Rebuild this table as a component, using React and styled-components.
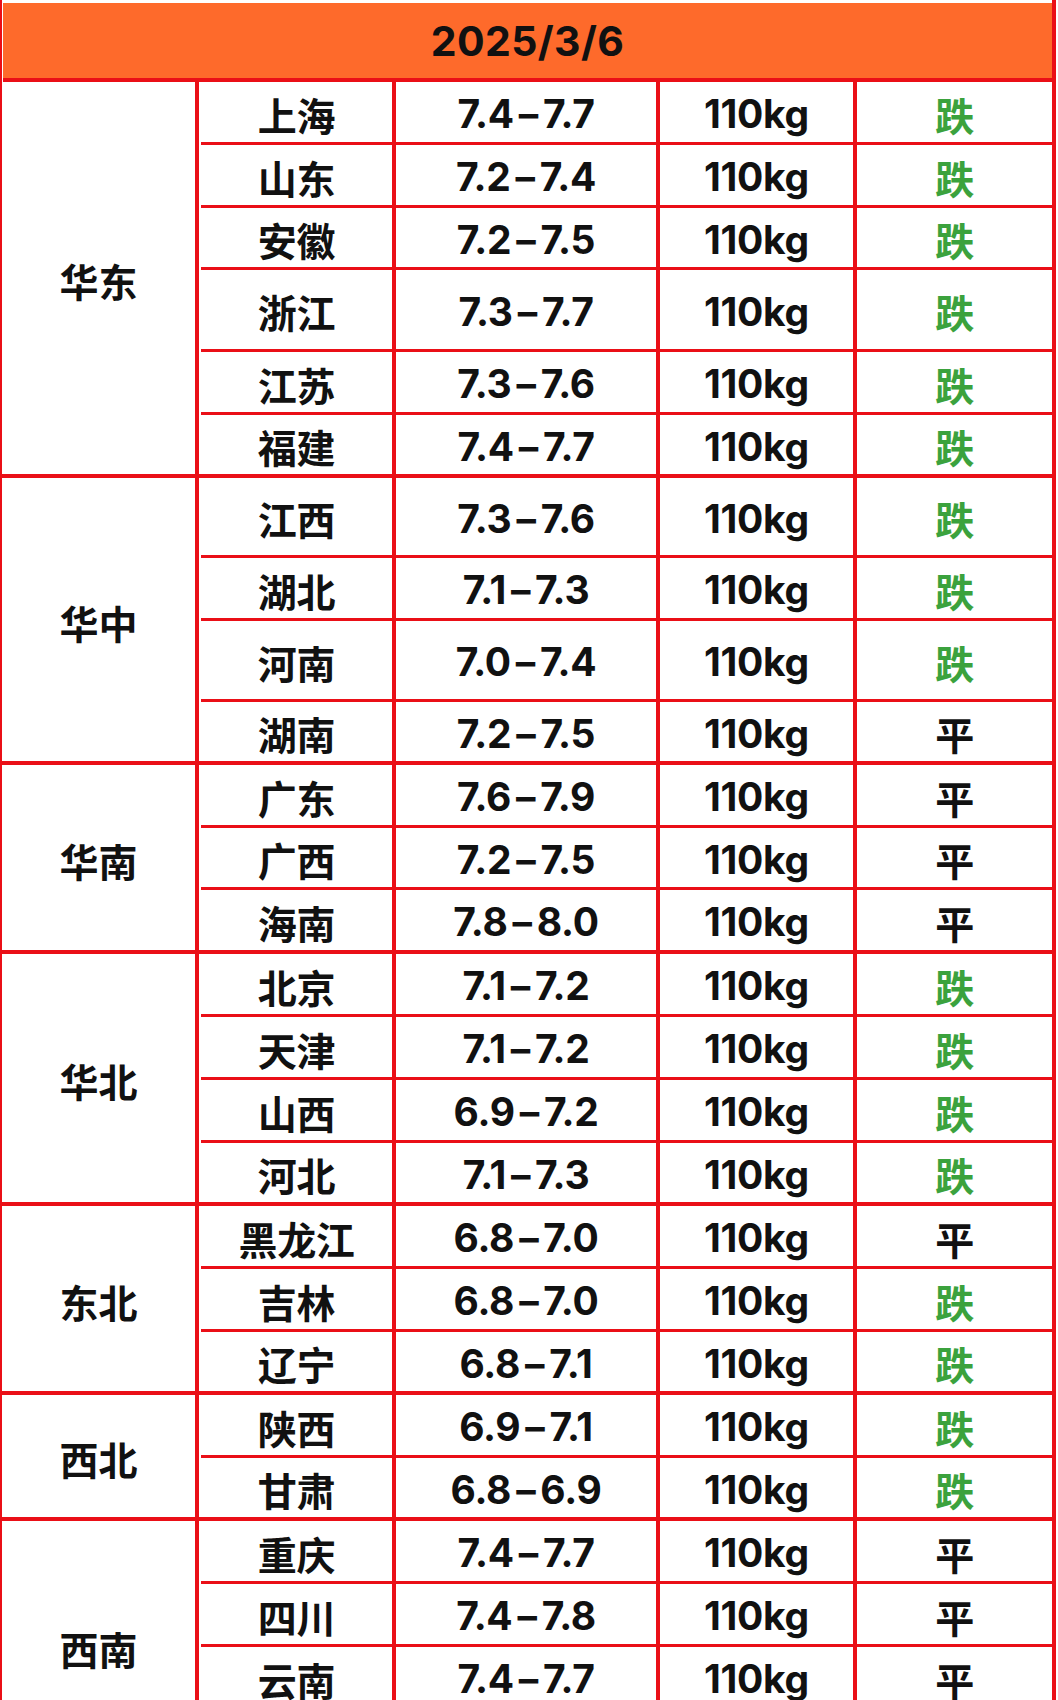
import styled, { createGlobalStyle } from "styled-components";

const RED = "#ea0f17";

const GlobalStyle = createGlobalStyle`
  body {
    margin: 0;
    background: #fff;
  }
`;

const Sheet = styled.div`
  width: 1056px;
  box-sizing: border-box;
  padding-top: 3px;
  border-left: 2px solid ${RED};
  border-right: 4px solid ${RED};
  font-family: Inter, "Noto Sans CJK SC", sans-serif;
  font-weight: 700;
  font-size: 39px;
  color: #111;
`;

const Header = styled.div`
  height: 75px;
  margin-left: 1px;
  background: #fe6a2b;
  border-bottom: 4px solid ${RED};
  display: flex;
  align-items: center;
  justify-content: center;
  font-size: 41px;
  letter-spacing: 0.4px;
`;

const Group = styled.div`
  display: flex;

  &:not(:last-child) {
    border-bottom: 4px solid ${RED};
  }
`;

const Region = styled.div`
  width: 193px;
  flex-shrink: 0;
  border-right: 4px solid ${RED};
  display: flex;
  align-items: center;
  justify-content: center;
  padding-top: 4px;
`;

const Rows = styled.div`
  flex: 1;
  padding-left: 2px;
  display: flex;
  flex-direction: column;
`;

const Row = styled.div`
  display: grid;
  grid-template-columns: 195px 264px 197px 195px;
  height: ${(p) => p.$h}px;

  & + & {
    border-top: 3px solid ${RED};
  }
`;

const Cell = styled.div`
  box-sizing: border-box;
  display: flex;
  align-items: center;
  justify-content: center;
  padding-top: 3px;
  letter-spacing: -0.3px;
  color: ${(p) => (p.$tone === "down" ? "#3ba23d" : "#111")};

  &:not(:last-child) {
    border-right: 4px solid ${RED};
  }
`;

const Dash = styled.span`
  margin: 0 5px;
`;

const groups = [
  {
    name: "华东",
    rows: [
      ["上海", "7.4–7.7", "跌", 60],
      ["山东", "7.2–7.4", "跌", 60],
      ["安徽", "7.2–7.5", "跌", 59],
      ["浙江", "7.3–7.7", "跌", 79],
      ["江苏", "7.3–7.6", "跌", 60],
      ["福建", "7.4–7.7", "跌", 59],
    ],
  },
  {
    name: "华中",
    rows: [
      ["江西", "7.3–7.6", "跌", 77],
      ["湖北", "7.1–7.3", "跌", 60],
      ["河南", "7.0–7.4", "跌", 78],
      ["湖南", "7.2–7.5", "平", 59],
    ],
  },
  {
    name: "华南",
    rows: [
      ["广东", "7.6–7.9", "平", 60],
      ["广西", "7.2–7.5", "平", 59],
      ["海南", "7.8–8.0", "平", 60],
    ],
  },
  {
    name: "华北",
    rows: [
      ["北京", "7.1–7.2", "跌", 60],
      ["天津", "7.1–7.2", "跌", 60],
      ["山西", "6.9–7.2", "跌", 60],
      ["河北", "7.1–7.3", "跌", 59],
    ],
  },
  {
    name: "东北",
    rows: [
      ["黑龙江", "6.8–7.0", "平", 60],
      ["吉林", "6.8–7.0", "跌", 60],
      ["辽宁", "6.8–7.1", "跌", 59],
    ],
  },
  {
    name: "西北",
    rows: [
      ["陕西", "6.9–7.1", "跌", 60],
      ["甘肃", "6.8–6.9", "跌", 59],
    ],
  },
  {
    name: "西南",
    rows: [
      ["重庆", "7.4–7.7", "平", 60],
      ["四川", "7.4–7.8", "平", 60],
      ["云南", "7.4–7.7", "平", 60],
      ["贵州", "7.3–7.6", "平", 60],
    ],
  },
];

const Range = ({ value }) => {
  const [lo, hi] = value.split("–");
  return (
    <>
      {lo}
      <Dash>–</Dash>
      {hi}
    </>
  );
};

export default function App() {
  return (
    <>
      <GlobalStyle />
      <Sheet>
        <Header>2025/3/6</Header>
        {groups.map((g) => (
          <Group key={g.name}>
            <Region>{g.name}</Region>
            <Rows>
              {g.rows.map(([prov, range, trend, h]) => (
                <Row key={prov} $h={h}>
                  <Cell>{prov}</Cell>
                  <Cell>
                    <Range value={range} />
                  </Cell>
                  <Cell>110kg</Cell>
                  <Cell $tone={trend === "跌" ? "down" : "flat"}>{trend}</Cell>
                </Row>
              ))}
            </Rows>
          </Group>
        ))}
      </Sheet>
    </>
  );
}
